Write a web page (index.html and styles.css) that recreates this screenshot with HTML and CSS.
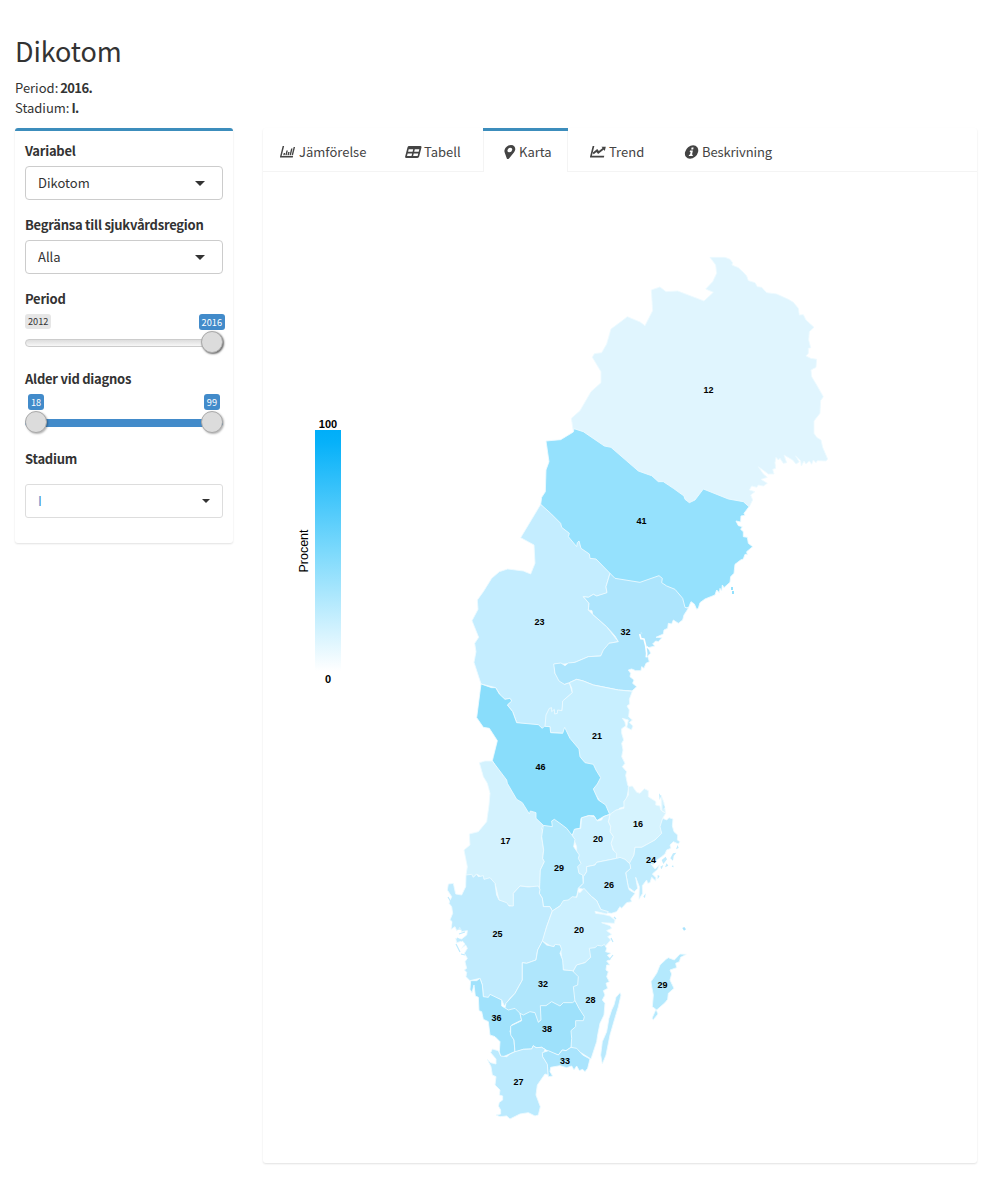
FILE: index.html
```html
<!DOCTYPE html>
<html lang="sv">
<head>
<meta charset="utf-8">
<title>Dikotom</title>
<link rel="stylesheet" href="styles.css">
</head>
<body>
<header class="head">
  <h1>Dikotom</h1>
  <p>Period: <b>2016.</b></p>
  <p>Stadium: <b>I.</b></p>
</header>
<div class="layout">
  <aside class="side">
    <div class="field">
      <label>Variabel</label>
      <div class="select"><span>Dikotom</span><i class="caret"></i></div>
    </div>
    <div class="field">
      <label>Begränsa till sjukvårdsregion</label>
      <div class="select"><span>Alla</span><i class="caret"></i></div>
    </div>
    <div class="field slider">
      <label>Period</label>
      <div class="tips"><span class="tip min">2012</span><span class="tip">2016</span></div>
      <div class="track"><i class="knob right dark"></i></div>
    </div>
    <div class="field slider">
      <label>Alder vid diagnos</label>
      <div class="tips inner"><span class="tip">18</span><span class="tip">99</span></div>
      <div class="track full"><i class="knob"></i><i class="knob right"></i></div>
    </div>
    <div class="field last">
      <label>Stadium</label>
      <div class="select light"><span class="value">I</span><i class="caret small"></i></div>
    </div>
  </aside>
  <main class="panel">
    <nav class="tabs">
      <a class="tab t1"><svg width="16" height="12" viewBox="0 0 16 12"><g transform="translate(2.6 0) skewX(-14)" fill="none" stroke="#444"><path d="M.8 0V10.8H13" stroke-width="1.5"/><path d="M3.6 9.2V7M5.7 9.2V4.6M7.8 9.2V6M9.9 9.2V2.6M12 9.2V1" stroke-width="1.4"/></g></svg><span>Jämförelse</span></a>
      <a class="tab t2"><svg width="17" height="12" viewBox="0 0 17 12"><g transform="translate(2.8 0) skewX(-14)"><rect width="14" height="12" rx="1.4" fill="#444"/><path d="M1.700 3.200h4.500v2.500H1.700zM7.800 3.200h4.500v2.500H7.800zM1.700 7.500h4.500V10H1.700zM7.800 7.500h4.500V10H7.800z" fill="#fff"/></g></svg><span>Tabell</span></a>
      <a class="tab t3 active"><svg width="14" height="14" viewBox="0 0 14 14"><g transform="translate(2.6 0) skewX(-13)"><path fill="#444" fill-rule="evenodd" d="M5.400 0a5.300 5.000 0 0 1 5.300 5c0 1-.3 1.600-.7 2.400L6.500 13.400q-1.100 1.200-2.200 0L.8 7.400C.3 6.600.1 6 .1 5a5.300 5 0 0 1 5.300-5zm0 2.700a2.300 2.300 0 1 0 0 4.600 2.300 2.300 0 0 0 0-4.600z"/></g></svg><span>Karta</span></a>
      <a class="tab t4"><svg width="17" height="12" viewBox="0 0 17 12"><g transform="translate(2.7 0) skewX(-14)" fill="none" stroke="#444"><path d="M.8 0V10.600H14" stroke-width="1.7"/><path d="M2.300 7.600 5.300 4.500 7.400 6.500 11.500 2.500" stroke-width="2.200"/><path fill="#444" stroke="none" d="M9 .7h4.300V5z"/></g></svg><span>Trend</span></a>
      <a class="tab t5"><svg width="16" height="14" viewBox="0 0 16 14"><g transform="translate(2.600 0) skewX(-13)"><ellipse cx="6.600" cy="7" rx="6.500" ry="6.800" fill="#444"/><path fill="#fff" d="M5.600 2.600h2v1.800h-2zM4.700 5.600h2.900v4.100h1V11H4.700V9.700h.9V6.900h-.9z"/></g></svg><span>Beskrivning</span></a>
    </nav>
    <svg class="map" width="714" height="990" viewBox="263 172 714 990">
      <defs><linearGradient id="scale" x1="0" y1="0" x2="0" y2="1"><stop offset="0" stop-color="#00aef9"/><stop offset=".05" stop-color="#06b1f9"/><stop offset=".5" stop-color="#7bd9fc"/><stop offset="1" stop-color="#fff"/></linearGradient></defs>
      <rect x="315" y="430" width="26" height="241" fill="url(#scale)"/>
      <g class="land">
        <g transform="translate(530 240) scale(.33333)">
          <path fill="#e0f5fe" d="M540 52 585 52 600 58 608 68 606 75 625 83 640 97 650 108 655 122 675 128 682 140 695 142 710 158 740 162 775 178 790 187 805 205 808 225 820 224 828 240 852 262 838 275 836 300 842 323 835 325 835 340 828 348 842 355 860 358 858 382 843 390 845 410 860 435 880 470 872 482 870 520 852 543 852 580 860 592 873 600 878 622 893 657 888 663 862 662 858 668 850 660 845 673 838 663 828 672 822 663 814 678 812 662 797 648 808 666 798 672 788 660 762 645 770 668 760 670 750 655 745 660 738 652 735 668 737 685 728 688 732 702 715 702 685 680 700 702 712 712 693 718 712 730 700 738 685 735 680 742 665 738 658 750 675 755 662 765 668 780 658 800 600 790 520 760 480 800 230 640 130 575 124 535 150 512 183 455 213 428 213 395 187 352 193 341 215 338 230 312 243 267 270 247 292 230 330 246 345 257 368 212 364 150 390 141 408 155 443 153 522 183 550 157 527 147 548 125 560 100 557 75Z"/>
        </g>
        <g transform="translate(510 410) scale(.33333)">
          <path fill="#95e1fd" d="M192 56 220 65 283 108 303 112 385 183 410 192 425 197 445 215 460 215 475 225 490 235 522 258 525 268 538 278 555 270 580 237 655 267 700 275 717 290 702 310 705 316 693 318 692 336 678 333 685 347 697 350 692 358 700 365 700 380 712 382 715 400 728 410 710 425 712 434 705 433 700 447 692 450 675 463 672 490 662 500 660 517 642 533 637 525 635 543 630 535 628 548 620 540 615 555 585 567 570 578 565 595 560 598 553 582 543 575 536 592 520 598 280 600 160 370 92 283 95 262 106 245 108 180 117 155 108 93 152 89 190 66Z"/>
        </g>
        <g transform="translate(460 500) scale(.33333)">
          <path fill="#c4edff" d="M242 13 272 40 302 70 305 82 328 100 325 110 350 140 352 128 357 123 363 145 388 162 390 175 408 177 450 220 438 260 441 280 410 288 400 283 385 292 370 290 387 310 385 330 398 343 440 380 475 425 447 430 422 468 385 470 345 487 315 492 283 492 285 520 313 553 328 548 337 578 310 603 306 632 270 690 170 668 158 635 142 615 155 603 150 595 135 598 122 587 107 563 63 552 42 487 48 455 44 430 56 412 36 362 54 328 52 300 70 275 95 235 118 215 143 207 190 213 212 222 225 190 222 135 182 113Z"/>
          <path fill="#ade5fd" d="M450 220 465 235 540 247 597 227 607 235 605 248 620 258 645 268 668 295 675 322 685 325 672 345 668 360 655 370 640 360 635 372 625 370 623 385 612 390 610 402 588 412 606 413 595 425 587 423 578 432 585 438 565 443 572 460 563 468 568 485 558 490 552 505 545 500 543 512 527 512 515 507 505 510 512 520 510 530 522 540 518 550 530 560 516 573 475 570 400 555 370 543 350 538 328 548 313 553 297 543 285 520 281 492 303 489 315 497 325 489 345 487 385 470 422 468 430 450 447 430 475 425 465 408 440 380 398 343 396 332 385 330 387 310 370 290 385 292 400 283 410 288 441 278 438 260Z"/>
          <path class="water" d="M539 402 543 416 552 417 557 437 560 460 559 472M560 440 570 448"/>
        </g>
        <g transform="translate(460 670) scale(.33333)">
          <path fill="#c8efff" d="M328 38 350 28 370 33 400 45 475 60 517 64 508 88 509 102 501 108 508 120 506 140 517 150 508 158 519 168 514 180 500 172 505 150 487 145 495 156 497 168 485 176 485 190 491 210 485 220 489 240 485 260 495 280 487 290 500 305 497 316 503 345 507 352 500 385 492 395 494 410 478 415 468 432 447 436 320 240 308 190 272 188 270 170 255 170 258 135 268 115 275 113 275 125 283 118 284 132 292 130 293 120 306 122 308 93 337 68 335 54Z"/>
          <path fill="#89ddfb" d="M63 42 95 53 107 53 118 72 135 88 150 85 155 93 142 105 158 125 170 158 235 164 247 175 253 169 270 170 272 188 308 190 314 172 330 205 357 237 360 260 375 278 400 283 408 300 422 323 412 342 400 357 415 390 437 405 449 433 430 440 410 452 402 437 385 437 363 445 360 475 345 478 335 500 250 480 165 390 97 272 100 260 112 212 88 175 70 172 50 143Z"/>
        </g>
        <g transform="translate(435 750) scale(.33333)">
          <path fill="#d3f2fe" d="M133 38 150 33 172 33 215 90 217 100 245 148 262 158 283 192 286 183 303 188 303 205 325 226 320 235 325 250 320 260 326 300 323 325 328 335 316 360 315 413 255 408 235 430 237 470 215 465 192 450 180 400 165 405 145 385 125 372 115 382 93 375 97 350 87 300 105 285 103 252 130 245 155 215 162 165 165 130 157 100 145 80Z"/>
          <path fill="#d6f3fe" d="M525 193 543 180 567 175 567 155 580 135 580 110 592 108 605 127 615 130 628 116 640 122 640 140 663 155 662 165 675 168 677 180 690 188 680 183 678 135 687 158 692 190 683 205 678 225 680 250 660 270 620 292 600 292 597 315 585 342 570 328 545 325 528 280 535 260 525 245 527 230 520 215Z"/>
          <path fill="#c0ecfe" d="M683 205 695 210 702 203 714 207 712 228 717 245 728 255 727 270 735 275 730 282 715 275 705 285 708 295 695 300 690 312 680 320 666 330 655 345 648 342 660 357 673 345 668 358 652 372 663 383 662 393 650 382 645 398 638 400 635 390 622 407 623 430 612 448 613 410 602 382 608 415 598 425 580 412 575 385 572 368 587 355 583 340 597 315 600 292 620 292 660 270 680 250 675 230Z"/>
          <path fill="#ccf0ff" d="M412 257 418 238 437 235 440 203 462 197 478 200 487 213 500 210 505 200 525 193 520 215 527 230 525 245 535 260 528 280 534 300 545 310 545 325 485 337 480 345 455 350 455 365 445 382 425 365 425 290Z"/>
          <path fill="#b4e9fd" d="M325 226 352 230 350 213 358 208 375 220 395 235 412 257 420 268 416 290 433 315 430 325 438 340 428 350 432 370 443 375 445 400 430 415 425 440 400 450 395 458 375 468 352 483 345 470 325 470 322 445 313 430 316 360 328 335 323 325 326 300 320 260Z"/>
          <path fill="#bceafe" d="M445 380 455 365 455 350 480 345 485 337 545 325 555 322 570 328 585 342 587 355 572 368 575 385 580 412 583 420 600 430 587 447 590 455 575 458 560 475 555 470 545 485 530 490 510 488 497 478 485 452 470 440 447 418 430 415 445 400Z"/>
          <path fill="#c0ecfe" stroke="none" d="M680 330 692 320 696 328 685 342ZM706 325 714 310 724 308 716 318 714 332ZM676 350 685 345 680 358ZM695 340 700 347 690 352ZM668 375 674 378 668 388ZM625 440 632 430 630 444ZM710 350 714 345 716 352ZM723 298 728 285 731 294ZM672 130 678 138 674 150ZM685 163 690 172 684 176Z"/>
          <path fill="#a9e3fd" stroke="none" d="M742 534 748 531 753 538 747 542Z"/>
        </g>
        <g transform="translate(435 870) scale(.33333)">
          <path fill="#c0ebfe" d="M93 15 110 13 115 22 125 12 130 20 145 17 147 28 165 23 180 40 185 75 192 90 215 98 222 108 235 108 235 70 255 48 280 51 310 48 315 58 313 70 322 85 325 110 345 110 352 123 335 170 325 210 308 240 303 270 275 280 262 278 262 330 240 370 225 385 208 408 200 390 165 375 160 385 145 380 142 345 135 325 105 332 93 320 95 307 88 300 95 295 90 275 97 265 88 250 97 235 92 225 80 235 90 222 82 213 65 218 62 205 80 207 95 195 97 182 80 185 75 173 65 182 60 170 48 178 52 155 45 150 53 130 50 110 42 100 50 80 37 60 40 42 55 40 62 72 80 75 92 50Z"/>
          <path fill="#ccf0ff" d="M352 123 375 108 385 92 400 90 412 80 425 82 430 65 435 68 447 55 470 80 485 92 497 118 520 125 515 132 480 124 482 130 505 133 525 138 540 150 538 160 500 158 525 167 530 175 515 182 530 193 518 200 527 210 510 230 467 262 450 278 425 285 415 303 385 300 375 225 350 230 322 213 335 170Z"/>
          <path fill="#b4e9fd" d="M693 268 700 263 718 270 735 252 754 253 737 262 733 275 722 280 725 293 705 300 710 312 705 330 717 355 700 370 698 388 690 398 665 420 652 410 655 375 650 350 648 335 665 310 675 285Z"/>
          <path fill="#b4e9fd" d="M663 418 669 432 655 449 651 445Z"/>
          <path fill="#b8e9fd" d="M463 235 480 233 488 226 500 228 508 223 515 235 512 245 528 250 517 256 528 268 515 273 525 285 515 285 513 300 520 305 515 320 523 335 513 340 518 355 505 362 510 375 502 390 510 400 507 435 495 460 488 495 485 515 468 567 425 540 408 532 405 480 400 455 400 360 415 303 425 285 450 278 467 262Z"/>
          <path fill="#afe6fc" d="M322 213 335 225 357 230 360 223 375 225 380 238 375 250 383 270 385 300 412 302 430 320 428 345 415 350 420 395 400 430 318 450 300 465 208 423 213 400 240 370 262 330 262 278 275 280 303 270 308 240Z"/>
        </g>
        <g transform="translate(460 960) scale(.33333)">
          <path fill="#a0e2fc" d="M32 62 50 62 60 55 67 75 70 110 85 112 90 103 125 120 125 138 145 150 165 145 180 160 185 180 155 195 150 215 162 240 165 275 130 290 122 290 118 275 120 245 105 230 90 225 85 185 70 178 65 155 57 152 55 112 46 108 42 75 36 98 30 88Z"/>
          <path fill="#9ee1fb" d="M180 160 190 165 210 155 225 158 235 187 243 180 241 137 258 137 275 125 300 138 310 128 338 128 345 122 357 145 373 170 370 182 347 182 347 200 333 212 335 235 333 262 318 272 307 270 295 285 270 277 255 268 245 262 228 263 220 257 215 267 190 268 165 277 162 240 152 225 152 198 185 182Z"/>
          <path fill="#bbeafe" d="M122 288 140 290 150 282 165 275 190 268 215 267 220 257 228 263 245 262 255 268 248 290 262 310 265 345 255 342 232 375 228 405 241 440 235 465 225 468 205 458 180 462 150 477 140 468 120 470 108 465 122 462 122 450 115 438 118 427 128 420 128 408 118 405 120 390 105 375 108 350 97 345 93 320 82 298 92 308 108 312 108 297 92 278 97 267 115 272Z"/>
          <path fill="#a9e4fd" d="M247 278 265 272 295 285 307 270 318 272 333 262 350 265 368 285 390 297 383 325 375 335 368 328 358 332 350 318 342 330 335 318 320 323 300 317 272 322 270 335 278 348 265 350 262 313 248 290Z"/>
          <path fill="#b8e9fd" d="M480 98 483 105 475 140 463 180 450 225 438 285 427 312 422 285 427 245 440 215 447 175 455 150 462 135 468 112Z"/>
        </g>
        <path fill="#95e1fd" stroke="none" d="M731 587h2v3h-2zM732 591h2v3h-2z"/>
        <g class="isles"><path d="M453 921v6M457 929h4M457 938l5 3M456 944l4 8M459 934l6-2M461 954l4 1M448 897l3 5M611 938l2 4M613 955l-4 5M614 917l2 2M641 632l1 2"/></g>
      </g>
      <g class="nums">
        <text x="708.500" y="392.500">12</text><text x="641.500" y="524">41</text><text x="539.500" y="625">23</text><text x="625.500" y="635">32</text><text x="597" y="739">21</text><text x="540.500" y="769.500">46</text><text x="505.500" y="844">17</text><text x="559" y="871">29</text><text x="598" y="842">20</text><text x="638" y="827">16</text><text x="651" y="863">24</text><text x="609" y="888">26</text><text x="497.500" y="937">25</text><text x="579" y="933">20</text><text x="543" y="987">32</text><text x="590.500" y="1003">28</text><text x="662.500" y="988">29</text><text x="496.500" y="1021">36</text><text x="547" y="1032">38</text><text x="565" y="1064">33</text><text x="518.500" y="1085">27</text>
      </g>
      <g class="legend"><text x="328" y="428">100</text><text x="328" y="683">0</text><text class="axis" transform="translate(308 551) rotate(-90)">Procent</text></g>
    </svg>
  </main>
</div>
</body>
</html>
```
FILE: styles.css
```css
* { box-sizing: border-box; }
body {
  margin: 0;
  min-height: 1198px;
  padding: 35px 15px;
  background: #fff;
  color: #333;
  font: 13px/20px "Noto Sans CJK JP", "Noto Sans", sans-serif;
}
.head { height: 93px; }
.head h1 { margin: 0 0 12px; font-size: 27px; line-height: 31px; font-weight: 400; letter-spacing: -.1px; }
.head p { margin: 0; }
.head b { margin-left: -1px; letter-spacing: -.6px; }
label { letter-spacing: -.25px; }
.layout { display: flex; gap: 30px; align-items: flex-start; }
.side {
  width: 218px;
  height: 415px;
  padding: 10px 10px 0;
  border-top: 3px solid #3c8dbc;
  border-radius: 3px;
  box-shadow: 0 1px 2px rgba(0,0,0,.12);
}
.field { height: 74px; }
.field label { display: block; font-weight: 700; line-height: 20px; margin-bottom: 5px; }
.select {
  display: flex;
  align-items: center;
  justify-content: space-between;
  height: 34px;
  padding: 0 17px 0 12px;
  border: 1px solid #ccc;
  border-radius: 4px;
}
.select.light { border-color: #ddd; padding-right: 12px; border-radius: 3px; }
.value { color: #428bca; }
.caret { border: 5px solid transparent; border-top-color: #333; border-bottom: 0; }
.caret.small { border-width: 4px 4px 0; }
.slider { height: 80px; }
.slider label { margin-bottom: 5px; }
.tips { display: flex; justify-content: space-between; height: 16px; margin-right: -2px; }
.tips.inner { padding: 0 5px 0 3px; }
.tip {
  height: 16px;
  padding: 0 3px;
  border-radius: 3px;
  background: #428bca;
  color: #fff;
  font-size: 9.200px;
  line-height: 16px;
}
.tip.min { height: 15px; background: #e6e6e6; color: #333; line-height: 15px; }
.track {
  position: relative;
  height: 8px;
  margin-top: 9px;
  border: 1px solid #ccc;
  border-radius: 8px;
  background: linear-gradient(#ddd, #f7f7f7);
}
.track.full { background: #428bca; border-color: #428bca; }
.knob {
  position: absolute;
  top: -9px;
  left: -1px;
  width: 22px;
  height: 22px;
  border: 1px solid #aaa;
  border-radius: 50%;
  background: #dcdcdc;
  box-shadow: 1px 1px 2px rgba(0,0,0,.3);
}
.knob.right { left: auto; right: -1px; }
.knob.dark { box-shadow: 1px 1px 2px rgba(0,0,0,.6); }
.last label { margin-bottom: 15px; }
.panel {
  width: 714px;
  height: 1035px;
  border-radius: 3px;
  box-shadow: 0 1px 2px rgba(0,0,0,.12);
}
.tabs { display: flex; height: 44px; border-bottom: 1px solid #f4f4f4; color: #444; }
.tab { display: flex; align-items: center; height: 44px; border-top: 3px solid transparent; white-space: nowrap; }
.tab svg { flex: none; }
.t1 { width: 125px; padding-left: 17px; gap: 3px; }
.t2 { width: 95px; padding-left: 17px; gap: 2px; }
.t3 { width: 85px; padding-left: 20px; gap: 2px; }
.t4 { width: 100px; padding-left: 22px; gap: 2px; }
.t5 { padding-left: 16px; gap: 2px; letter-spacing: -.1px; }
.tab.active { background: #fff; border-top-color: #3c8dbc; box-shadow: inset 1px 0 #f4f4f4, inset -1px 0 #f4f4f4; }
.map { display: block; }
.land path { stroke: #eefaff; stroke-width: 2.600; stroke-linejoin: round; }
.land path[stroke="none"] { stroke: none; }
.land .water { fill: none; stroke: #fff; stroke-width: 5; }
.land .isles path { fill: none; stroke: #c0ebfe; stroke-width: 1.200; }
.nums text, .legend text { text-anchor: middle; font-family: "Liberation Sans", Arial, sans-serif; font-weight: 700; font-size: 9px; fill: #000; }
.legend text { font-size: 11px; }
.legend .axis { font-weight: 400; font-size: 12.500px; }
```
